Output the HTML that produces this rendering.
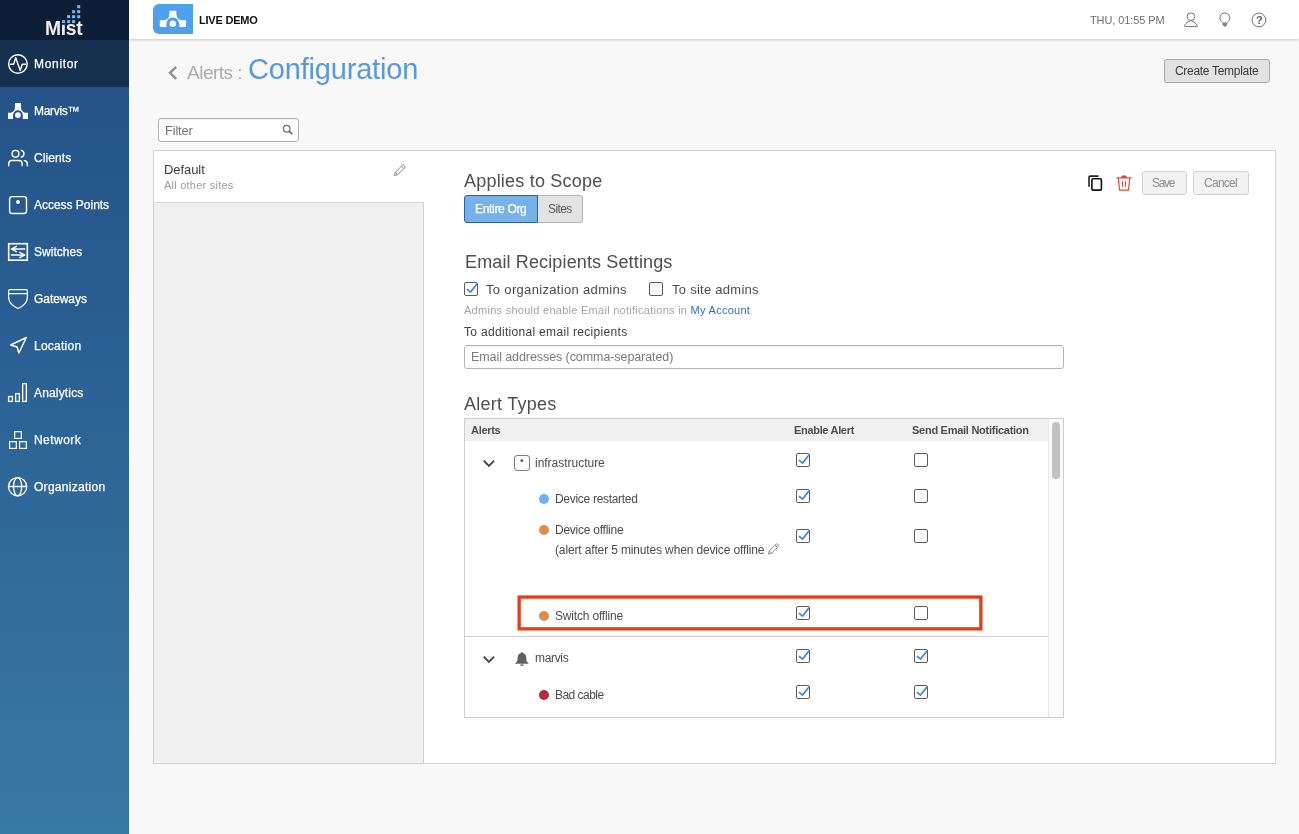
<!DOCTYPE html>
<html lang="en">
<head>
<meta charset="utf-8">
<title>Alerts : Configuration</title>
<style>
*{box-sizing:border-box;margin:0;padding:0}
html,body{width:1299px;height:834px;overflow:hidden}
body{position:relative;background:#f8f8f8;font-family:"Liberation Sans",sans-serif;color:#4a4a4a;font-size:12px}
.abs{position:absolute;white-space:nowrap}
.abs[id]{z-index:5;will-change:transform}
#side{position:absolute;left:0;top:0;width:129px;height:834px;background:linear-gradient(to bottom,#245389 0px,#245389 87px,#2b6094 360px,#306b9b 560px,#3979a6 834px)}
#logo{position:absolute;left:0;top:0;width:129px;height:40px;background:#0d1e37}
#mon{position:absolute;left:0;top:40px;width:129px;height:47px;background:#16304f}
#head{position:absolute;left:129px;top:0;width:1170px;height:39px;background:#fff;box-shadow:0 1px 3px rgba(0,0,0,.19)}
.btn{position:absolute;border:1px solid #a9a9a9;border-radius:3px;background:#e2e2e2}
.cb{position:absolute;width:14px;height:14px;border:1px solid #5c5c5c;border-radius:2px;background:#fff}
.cb svg{position:absolute;left:0;top:0;width:12px;height:12px}
.dot{position:absolute;width:10px;height:10px;border-radius:50%}
svg{position:absolute;overflow:visible}
.w *{fill:none;stroke:#fff;stroke-width:1.4;stroke-linecap:round;stroke-linejoin:round}

</style>
</head>
<body>
<!-- SIDEBAR -->
<div id="side">
  <div id="logo"></div>
  <div id="mon"></div>
</div>
<!-- mist logo dots -->
<svg style="left:0;top:0;z-index:6" width="129" height="40" viewBox="0 0 129 40">
  <rect x="61" y="19" width="6.2" height="5.7" fill="#0d1e37"/>
  <g fill="#74b6f3">
    <rect x="77.2" y="5.2" width="3" height="3"/>
    <rect x="72.1" y="10.2" width="3" height="3"/><rect x="77.2" y="10.2" width="3" height="3"/>
    <rect x="67.1" y="15.2" width="3" height="3"/><rect x="72.1" y="15.2" width="3" height="3"/><rect x="77.2" y="15.2" width="3" height="3"/>
    <rect x="62.1" y="20.1" width="3" height="3"/><rect x="67.1" y="20.1" width="3" height="3"/><rect x="72.1" y="20.1" width="3" height="3"/>
  </g>
</svg>
<!-- sidebar icons -->
<svg class="w" style="left:0;top:40px" width="40" height="470" viewBox="0 40 40 470">
  <!-- monitor -->
  <circle cx="17.9" cy="64" r="9.3"/>
  <path d="M10.3 64.2 H13.6 L15.7 57.8 L20.2 70.5 L22.3 64.2 H25.5"/>
  <!-- marvis -->
  <path d="M15 103 H21 V107.5 Q21.5 112 25 112.7 H28 V119 H8 V112.7 H11 Q14.5 112 15 107.5 Z" style="fill:#fff;stroke:none"/>
  <rect x="13.1" y="115.1" width="9.6" height="4.6" style="fill:#24538a;stroke:none"/>
  <circle cx="17.9" cy="115.1" r="4.8" style="fill:#24538a;stroke:none"/>
  <circle cx="17.9" cy="115.1" r="2.9" style="fill:#fff;stroke:none"/>
  <!-- clients -->
  <circle cx="15.5" cy="153.8" r="3.4"/>
  <path d="M21.3 150.4 A3.5 3.5 0 0 1 21.3 157.2"/>
  <path d="M8.75 165.8 V163.6 A3.1 3.1 0 0 1 11.85 160.5 H19 A3.1 3.1 0 0 1 22.1 163.6 V165.8"/>
  <path d="M24.2 160.6 A3.3 3.3 0 0 1 27.3 163.9 V165.8"/>
  <!-- access points -->
  <rect x="9.6" y="196.6" width="16.9" height="16.9" rx="2.6"/>
  <circle cx="18" cy="202" r="2" style="fill:#fff;stroke:none"/>
  <!-- switches -->
  <rect x="8.7" y="243.7" width="18.6" height="16.5" style="stroke-linejoin:miter;stroke-width:1.6"/>
  <path d="M24.7 249 H11.6 M16.4 246.3 L11.4 249 L16.4 251.7 M11.4 255 H24.5 M19.8 252.3 L24.8 255 L19.8 257.7"/>
  <!-- gateways -->
  <path d="M8.6 291 Q8.6 289.6 10 289.6 H26 Q27.4 289.6 27.4 291 V297 C27.4 303 22 307 18 308.5 C14 307 8.6 303 8.6 297 Z M8.6 293.6 H27.4" style="stroke-width:1.2"/>
  <!-- location -->
  <path d="M26.3 337.5 L10.7 345 L17.1 347 L18.9 353 Z"/>
  <!-- analytics -->
  <rect x="8.6" y="396.5" width="3.8" height="4.9" style="stroke-width:1.3;stroke-linejoin:miter"/>
  <rect x="15.65" y="393.6" width="3.7" height="7.8" style="stroke-width:1.3;stroke-linejoin:miter"/>
  <rect x="22.65" y="383.7" width="3.7" height="17.7" style="stroke-width:1.3;stroke-linejoin:miter"/>
  <!-- network -->
  <rect x="14.7" y="431.7" width="6.7" height="6.7" style="stroke-width:1.2;stroke-linejoin:miter"/>
  <rect x="9.6" y="441.7" width="6.7" height="6.7" style="stroke-width:1.2;stroke-linejoin:miter"/>
  <rect x="19.6" y="441.7" width="6.7" height="6.7" style="stroke-width:1.2;stroke-linejoin:miter"/>
  <!-- organization -->
  <circle cx="17.6" cy="486.7" r="9.1" style="stroke-width:1.3"/>
  <ellipse cx="17.6" cy="486.7" rx="4.1" ry="9.1" style="stroke-width:1.3"/>
  <path d="M8.5 486.5 H26.7" style="stroke-width:1.3"/>
</svg>

<!-- HEADER -->
<div id="head"></div>
<div class="abs" style="left:153px;top:4px;width:40px;height:30px;background:#4ea0ee;border-radius:6px 0 0 6px"></div>
<svg style="left:153px;top:4px" width="40" height="30" viewBox="153 4 40 30">
  <path d="M169.4 10.8 H176.3 V14 Q176.8 20.2 182.5 20.2 H186.1 V27.1 H159.8 V20.2 H163.4 Q168.9 20.2 169.4 14 Z" fill="#fff"/>
  <rect x="166.5" y="23.8" width="12.9" height="3.5" fill="#4ea0ee"/>
  <circle cx="172.8" cy="23.8" r="6.35" fill="#4ea0ee"/>
  <circle cx="172.8" cy="23.8" r="3.2" fill="#fff"/>
</svg>
<!-- header icons -->
<svg style="left:1176px;top:5px" width="100" height="30" viewBox="1176 5 100 30" fill="none" stroke="#727272" stroke-width="1">
  <circle cx="1190.9" cy="16.7" r="3.8"/>
  <path d="M1190.9 20.4 C1188 22.2 1185.3 23.2 1184.5 25.6 Q1184.1 26.6 1185.3 26.6 H1196.5 Q1197.7 26.6 1197.3 25.6 C1196.5 23.2 1193.8 22.2 1190.9 20.4 Z" stroke-linejoin="round"/>
  <path d="M1222.5 22.6 C1221.2 21.4 1220 19.9 1220 17.9 A4.9 4.9 0 0 1 1229.8 17.9 C1229.8 19.9 1228.6 21.4 1227.3 22.6"/>
  <path d="M1222.1 22.4 H1227.7 L1226.9 25.4 L1224.9 27.1 L1222.9 25.4 Z" fill="#868686" stroke="none"/>
  <circle cx="1258.9" cy="20" r="6.9"/>
</svg>

<!-- TITLE -->
<svg style="left:166px;top:64px" width="14" height="18" viewBox="166 64 14 18" fill="none" stroke="#8e8e8e" stroke-width="2.4"><path d="M176.2 66.8 L170 72.8 L176.2 78.8"/></svg>
<div class="btn" style="left:1164px;top:59px;width:106px;height:24px"></div>

<!-- FILTER -->
<div class="abs" style="left:158px;top:118px;width:141px;height:24px;border:1px solid #b0b0b0;border-radius:3px;background:#fff;box-shadow:inset 0 1px 1px rgba(0,0,0,.06)"></div>
<svg style="left:280px;top:122px" width="16" height="16" viewBox="280 122 16 16" fill="none" stroke="#6a6a6a"><circle cx="286.7" cy="128.7" r="3.3" stroke-width="1.2"/><path d="M289.2 131.2 L292.3 134.1" stroke-width="1.7"/></svg>

<!-- MAIN PANEL -->
<div class="abs" style="left:153px;top:150px;width:1123px;height:614px;border:1px solid #d2d2d2;background:#fff"></div>
<div class="abs" style="left:154px;top:202px;width:270px;height:561px;background:#f0f0f0;border-top:1px solid #d8d8d8;border-right:1px solid #d2d2d2"></div>
<svg id="pen1" style="left:394px;top:164px" width="12" height="12" viewBox="0 0 12 12" fill="none" stroke="#747474" stroke-width="0.85" stroke-linejoin="round"><path d="M0.4 11.6 L1.3 8.3 L8.3 1.3 Q9.2 0.4 10.1 1.3 L10.7 1.9 Q11.6 2.8 10.7 3.7 L3.7 10.7 Z M1.3 8.3 L3.7 10.7 M7.4 2.2 L9.8 4.6"/></svg>

<!-- RIGHT PANEL -->
<svg style="left:1086px;top:172px" width="50" height="22" viewBox="1086 172 50 22" fill="none">
  <path d="M1089 186.7 V177.3 Q1089 176.1 1090.2 176.1 H1098.5" stroke="#222" stroke-width="1.6"/>
  <rect x="1091.9" y="178.7" width="9.5" height="11.4" rx="1.2" stroke="#111" stroke-width="1.6"/>
  <g stroke="#e8452a" stroke-width="1.2">
    <path d="M1116.3 177.9 H1131.7"/>
    <path d="M1121.1 177.9 Q1121.1 175.2 1124 175.2 Q1126.9 175.2 1126.9 177.9 Z" fill="#e8452a" stroke="none"/>
    <path d="M1118.3 178 L1119.6 190.2 H1128.4 L1129.8 178" stroke-linejoin="round"/>
    <path d="M1122.5 181.2 V186.7 M1125.5 181.2 V186.7"/>
  </g>
</svg>
<div class="btn" style="left:464px;top:195px;width:74px;height:28px;background:#76b1ea;border-color:#2a62aa;border-radius:3px 0 0 3px;z-index:2"></div>
<div class="btn" style="left:537px;top:195px;width:46px;height:28px;border-radius:0 3px 3px 0;border-color:#b4b4b4"></div>
<div class="btn" style="left:1142px;top:171px;width:45px;height:24px;background:#f2f2f2;border-color:#d2d2d2"></div>
<div class="btn" style="left:1193px;top:171px;width:56px;height:24px;background:#f2f2f2;border-color:#d2d2d2"></div>

<div class="cb" style="left:464px;top:282px"><svg viewBox="0 0 12 12"><path d="M1.9 6.2 L5.6 9.1 L11.9 1" fill="none" stroke="#3a84d8" stroke-width="1.7" stroke-linejoin="round"/></svg></div>
<div class="cb" style="left:649px;top:282px"></div>
<div class="abs" style="left:464px;top:345px;width:600px;height:24px;border:1px solid #b4b4b4;border-radius:3px;background:#fff;box-shadow:inset 0 1px 1px rgba(0,0,0,.06)"></div>

<div class="abs" style="left:464px;top:418px;width:600px;height:300px;border:1px solid #cfcfcf;background:#fff"></div>
<div class="abs" style="left:465px;top:419px;width:583px;height:22px;background:#f0f0f0"></div>
<div class="abs" style="left:1048px;top:419px;width:15px;height:298px;background:#fafafa;border-left:1px solid #e8e8e8"></div>
<div class="abs" style="left:1052px;top:422px;width:8px;height:57px;border-radius:4px;background:#c1c1c1"></div>

<!-- group icons -->
<svg style="left:480px;top:450px" width="60" height="230" viewBox="480 450 60 230" fill="none">
  <path d="M483.7 460.6 L488.9 465.8 L494.1 460.6" stroke="#444" stroke-width="1.9"/>
  <path d="M483.7 656.6 L488.9 661.8 L494.1 656.6" stroke="#444" stroke-width="1.9"/>
  <rect x="514.5" y="455.5" width="15" height="15" rx="2.6" stroke="#7a7a7a" stroke-width="1"/>
  <circle cx="521.8" cy="460.7" r="1.4" fill="#555"/>
  <path d="M521.9 652 Q522.7 652 522.8 653 C525.3 653.6 526.3 655.6 526.3 658 C526.3 661 527 662.2 528.9 663.7 H515 C516.8 662.2 517.6 661 517.6 658 C517.6 655.6 518.6 653.6 521 653 Q521.1 652 521.9 652 Z" fill="#606060"/>
  <path d="M520 664.5 H523.9 Q523.4 666.1 521.95 666.1 Q520.5 666.1 520 664.5 Z" fill="#606060"/>
</svg>

<div class="dot" style="left:539px;top:494px;background:#6cb0f1"></div>
<div class="dot" style="left:539px;top:525px;background:#e08c49"></div>
<svg id="pen2" style="left:768px;top:542.5px" width="11.5" height="11.5" viewBox="0 0 12 12" fill="none" stroke="#747474" stroke-width="0.85" stroke-linejoin="round"><path d="M0.4 11.6 L1.3 8.3 L8.3 1.3 Q9.2 0.4 10.1 1.3 L10.7 1.9 Q11.6 2.8 10.7 3.7 L3.7 10.7 Z M1.3 8.3 L3.7 10.7 M7.4 2.2 L9.8 4.6"/></svg>
<svg style="left:510px;top:590px" width="480" height="46" viewBox="510 590 480 46"><rect x="519.15" y="597.05" width="461.7" height="31.8" fill="none" stroke="#e83c13" stroke-width="3.3"/></svg>
<div class="dot" style="left:539px;top:611px;background:#e08c49"></div>
<div class="abs" style="left:465px;top:636px;width:583px;height:1px;background:#d0d0d0"></div>
<div class="dot" style="left:539px;top:690px;background:#b82b3c"></div>
<div class="cb" style="left:796px;top:453px"><svg viewBox="0 0 12 12"><path d="M1.9 6.2 L5.6 9.1 L11.9 1" fill="none" stroke="#3a84d8" stroke-width="1.7" stroke-linejoin="round"/></svg></div><div class="cb" style="left:914px;top:453px"></div>
<div class="cb" style="left:796px;top:489px"><svg viewBox="0 0 12 12"><path d="M1.9 6.2 L5.6 9.1 L11.9 1" fill="none" stroke="#3a84d8" stroke-width="1.7" stroke-linejoin="round"/></svg></div><div class="cb" style="left:914px;top:489px"></div>
<div class="cb" style="left:796px;top:529px"><svg viewBox="0 0 12 12"><path d="M1.9 6.2 L5.6 9.1 L11.9 1" fill="none" stroke="#3a84d8" stroke-width="1.7" stroke-linejoin="round"/></svg></div><div class="cb" style="left:914px;top:529px"></div>
<div class="cb" style="left:796px;top:606px"><svg viewBox="0 0 12 12"><path d="M1.9 6.2 L5.6 9.1 L11.9 1" fill="none" stroke="#3a84d8" stroke-width="1.7" stroke-linejoin="round"/></svg></div><div class="cb" style="left:914px;top:606px"></div>
<div class="cb" style="left:796px;top:649px"><svg viewBox="0 0 12 12"><path d="M1.9 6.2 L5.6 9.1 L11.9 1" fill="none" stroke="#3a84d8" stroke-width="1.7" stroke-linejoin="round"/></svg></div><div class="cb" style="left:914px;top:649px"><svg viewBox="0 0 12 12"><path d="M1.9 6.2 L5.6 9.1 L11.9 1" fill="none" stroke="#3a84d8" stroke-width="1.7" stroke-linejoin="round"/></svg></div>
<div class="cb" style="left:796px;top:685px"><svg viewBox="0 0 12 12"><path d="M1.9 6.2 L5.6 9.1 L11.9 1" fill="none" stroke="#3a84d8" stroke-width="1.7" stroke-linejoin="round"/></svg></div><div class="cb" style="left:914px;top:685px"><svg viewBox="0 0 12 12"><path d="M1.9 6.2 L5.6 9.1 L11.9 1" fill="none" stroke="#3a84d8" stroke-width="1.7" stroke-linejoin="round"/></svg></div>


<!-- TEXT -->
<div class="abs" id="nv0" style="left:34.00px;top:56.04px;font-size:12px;line-height:16px;font-weight:normal;color:#fff;letter-spacing:0.681px;-webkit-text-stroke:0.25px #fff">Monitor</div>
<div class="abs" id="nv1" style="left:34.00px;top:103.04px;font-size:12px;line-height:16px;font-weight:normal;color:#fff;letter-spacing:-0.307px;-webkit-text-stroke:0.25px #fff">Marvis™</div>
<div class="abs" id="nv2" style="left:34.00px;top:150.04px;font-size:12px;line-height:16px;font-weight:normal;color:#fff;letter-spacing:0.102px;-webkit-text-stroke:0.25px #fff">Clients</div>
<div class="abs" id="nv3" style="left:34.00px;top:197.04px;font-size:12px;line-height:16px;font-weight:normal;color:#fff;letter-spacing:-0.023px;-webkit-text-stroke:0.25px #fff">Access Points</div>
<div class="abs" id="nv4" style="left:34.00px;top:244.04px;font-size:12px;line-height:16px;font-weight:normal;color:#fff;letter-spacing:0.038px;-webkit-text-stroke:0.25px #fff">Switches</div>
<div class="abs" id="nv5" style="left:34.00px;top:291.04px;font-size:12px;line-height:16px;font-weight:normal;color:#fff;letter-spacing:-0.066px;-webkit-text-stroke:0.25px #fff">Gateways</div>
<div class="abs" id="nv6" style="left:34.00px;top:338.04px;font-size:12px;line-height:16px;font-weight:normal;color:#fff;letter-spacing:0.246px;-webkit-text-stroke:0.25px #fff">Location</div>
<div class="abs" id="nv7" style="left:34.00px;top:385.04px;font-size:12px;line-height:16px;font-weight:normal;color:#fff;letter-spacing:0.159px;-webkit-text-stroke:0.25px #fff">Analytics</div>
<div class="abs" id="nv8" style="left:34.00px;top:432.04px;font-size:12px;line-height:16px;font-weight:normal;color:#fff;letter-spacing:0.447px;-webkit-text-stroke:0.25px #fff">Network</div>
<div class="abs" id="nv9" style="left:34.00px;top:479.04px;font-size:12px;line-height:16px;font-weight:normal;color:#fff;letter-spacing:0.278px;-webkit-text-stroke:0.25px #fff">Organization</div>
<div class="abs" id="mist" style="left:45.40px;top:15.71px;font-size:19.3px;line-height:26px;font-weight:bold;color:#eeeef2;letter-spacing:-0.288px">Mist</div>
<div class="abs" id="q" style="left:1255.90px;top:12.89px;font-size:11px;line-height:15px;font-weight:bold;color:#5a5a5a;letter-spacing:-0.934px">?</div>
<div class="abs" id="live" style="left:199.30px;top:12.69px;font-size:11px;line-height:15px;font-weight:bold;color:#111;letter-spacing:-0.202px">LIVE DEMO</div>
<div class="abs" id="time" style="left:1090.00px;top:12.69px;font-size:11px;line-height:15px;font-weight:normal;color:#6e6e6e;letter-spacing:-0.101px">THU, 01:55 PM</div>
<div class="abs" id="t1" style="left:187.10px;top:59.92px;font-size:19px;line-height:25px;font-weight:normal;color:#acacac;letter-spacing:-0.504px">Alerts :</div>
<div class="abs" id="t2" style="left:248.20px;top:49.95px;font-size:29px;line-height:38px;font-weight:normal;color:#5698e2;letter-spacing:-0.183px">Configuration</div>
<div class="abs" id="ct" style="left:1175.10px;top:62.84px;font-size:12px;line-height:16px;font-weight:normal;color:#3a3a3a;letter-spacing:-0.302px">Create Template</div>
<div class="abs" id="flt" style="left:165.10px;top:122.00px;font-size:13px;line-height:17px;font-weight:normal;color:#747474;letter-spacing:-0.218px">Filter</div>
<div class="abs" id="df" style="left:164.10px;top:161.20px;font-size:13px;line-height:17px;font-weight:normal;color:#3e3e3e;letter-spacing:-0.067px">Default</div>
<div class="abs" id="aos" style="left:164.10px;top:177.99px;font-size:11px;line-height:15px;font-weight:normal;color:#9c9c9c;letter-spacing:0.233px">All other sites</div>
<div class="abs" id="h1" style="left:463.90px;top:168.76px;font-size:18px;line-height:24px;font-weight:normal;color:#4f4f4f;letter-spacing:0.207px">Applies to Scope</div>
<div class="abs" id="eo" style="left:475.00px;top:200.84px;font-size:12px;line-height:16px;font-weight:normal;color:#fff;letter-spacing:-0.321px;-webkit-text-stroke:0.25px #fff">Entire Org</div>
<div class="abs" id="st" style="left:547.70px;top:200.84px;font-size:12px;line-height:16px;font-weight:normal;color:#5a5a5a;letter-spacing:-0.622px">Sites</div>
<div class="abs" id="sv" style="left:1152.20px;top:174.84px;font-size:12px;line-height:16px;font-weight:normal;color:#8e8e8e;letter-spacing:-1.320px">Save</div>
<div class="abs" id="cn" style="left:1204.10px;top:174.84px;font-size:12px;line-height:16px;font-weight:normal;color:#8e8e8e;letter-spacing:-0.732px">Cancel</div>
<div class="abs" id="h2" style="left:464.60px;top:249.76px;font-size:18px;line-height:24px;font-weight:normal;color:#4f4f4f;letter-spacing:0.134px">Email Recipients Settings</div>
<div class="abs" id="c1" style="left:486.20px;top:281.00px;font-size:13px;line-height:17px;font-weight:normal;color:#4c4c4c;letter-spacing:0.328px">To organization admins</div>
<div class="abs" id="c2" style="left:671.50px;top:281.00px;font-size:13px;line-height:17px;font-weight:normal;color:#4c4c4c;letter-spacing:0.270px">To site admins</div>
<div class="abs" id="n1" style="left:464.10px;top:302.69px;font-size:11px;line-height:15px;font-weight:normal;color:#a3a3a3;letter-spacing:0.272px">Admins should enable Email notifications in <span style="color:#2c6fb6">My Account</span></div>
<div class="abs" id="n2" style="left:464.10px;top:323.54px;font-size:12px;line-height:16px;font-weight:normal;color:#404040;letter-spacing:0.314px">To additional email recipients</div>
<div class="abs" id="n3" style="left:471.00px;top:348.87px;font-size:12.5px;line-height:17px;font-weight:normal;color:#7a7a7a;letter-spacing:-0.080px">Email addresses (comma-separated)</div>
<div class="abs" id="h3" style="left:464.10px;top:391.76px;font-size:18px;line-height:24px;font-weight:normal;color:#4f4f4f;letter-spacing:0.258px">Alert Types</div>
<div class="abs" id="th1" style="left:471.00px;top:422.69px;font-size:11px;line-height:15px;font-weight:bold;color:#4d4d4d;letter-spacing:-0.297px">Alerts</div>
<div class="abs" id="th2" style="left:794.20px;top:422.69px;font-size:11px;line-height:15px;font-weight:bold;color:#4d4d4d;letter-spacing:-0.316px">Enable Alert</div>
<div class="abs" id="th3" style="left:911.80px;top:422.69px;font-size:11px;line-height:15px;font-weight:bold;color:#4d4d4d;letter-spacing:-0.266px">Send Email Notification</div>
<div class="abs" id="r1" style="left:535.30px;top:454.64px;font-size:12px;line-height:16px;font-weight:normal;color:#4c4c4c;letter-spacing:-0.018px">infrastructure</div>
<div class="abs" id="r2" style="left:555.30px;top:491.24px;font-size:12px;line-height:16px;font-weight:normal;color:#4c4c4c;letter-spacing:-0.298px">Device restarted</div>
<div class="abs" id="r3" style="left:555.30px;top:522.24px;font-size:12px;line-height:16px;font-weight:normal;color:#4c4c4c;letter-spacing:-0.248px">Device offline</div>
<div class="abs" id="r4" style="left:554.70px;top:542.24px;font-size:12px;line-height:16px;font-weight:normal;color:#4c4c4c;letter-spacing:-0.142px">(alert after 5 minutes when device offline</div>
<div class="abs" id="r5" style="left:555.30px;top:608.24px;font-size:12px;line-height:16px;font-weight:normal;color:#4c4c4c;letter-spacing:-0.183px">Switch offline</div>
<div class="abs" id="r6" style="left:535.30px;top:650.24px;font-size:12px;line-height:16px;font-weight:normal;color:#4c4c4c;letter-spacing:-0.329px">marvis</div>
<div class="abs" id="r7" style="left:555.30px;top:687.24px;font-size:12px;line-height:16px;font-weight:normal;color:#4c4c4c;letter-spacing:-0.534px">Bad cable</div>
</body>
</html>
